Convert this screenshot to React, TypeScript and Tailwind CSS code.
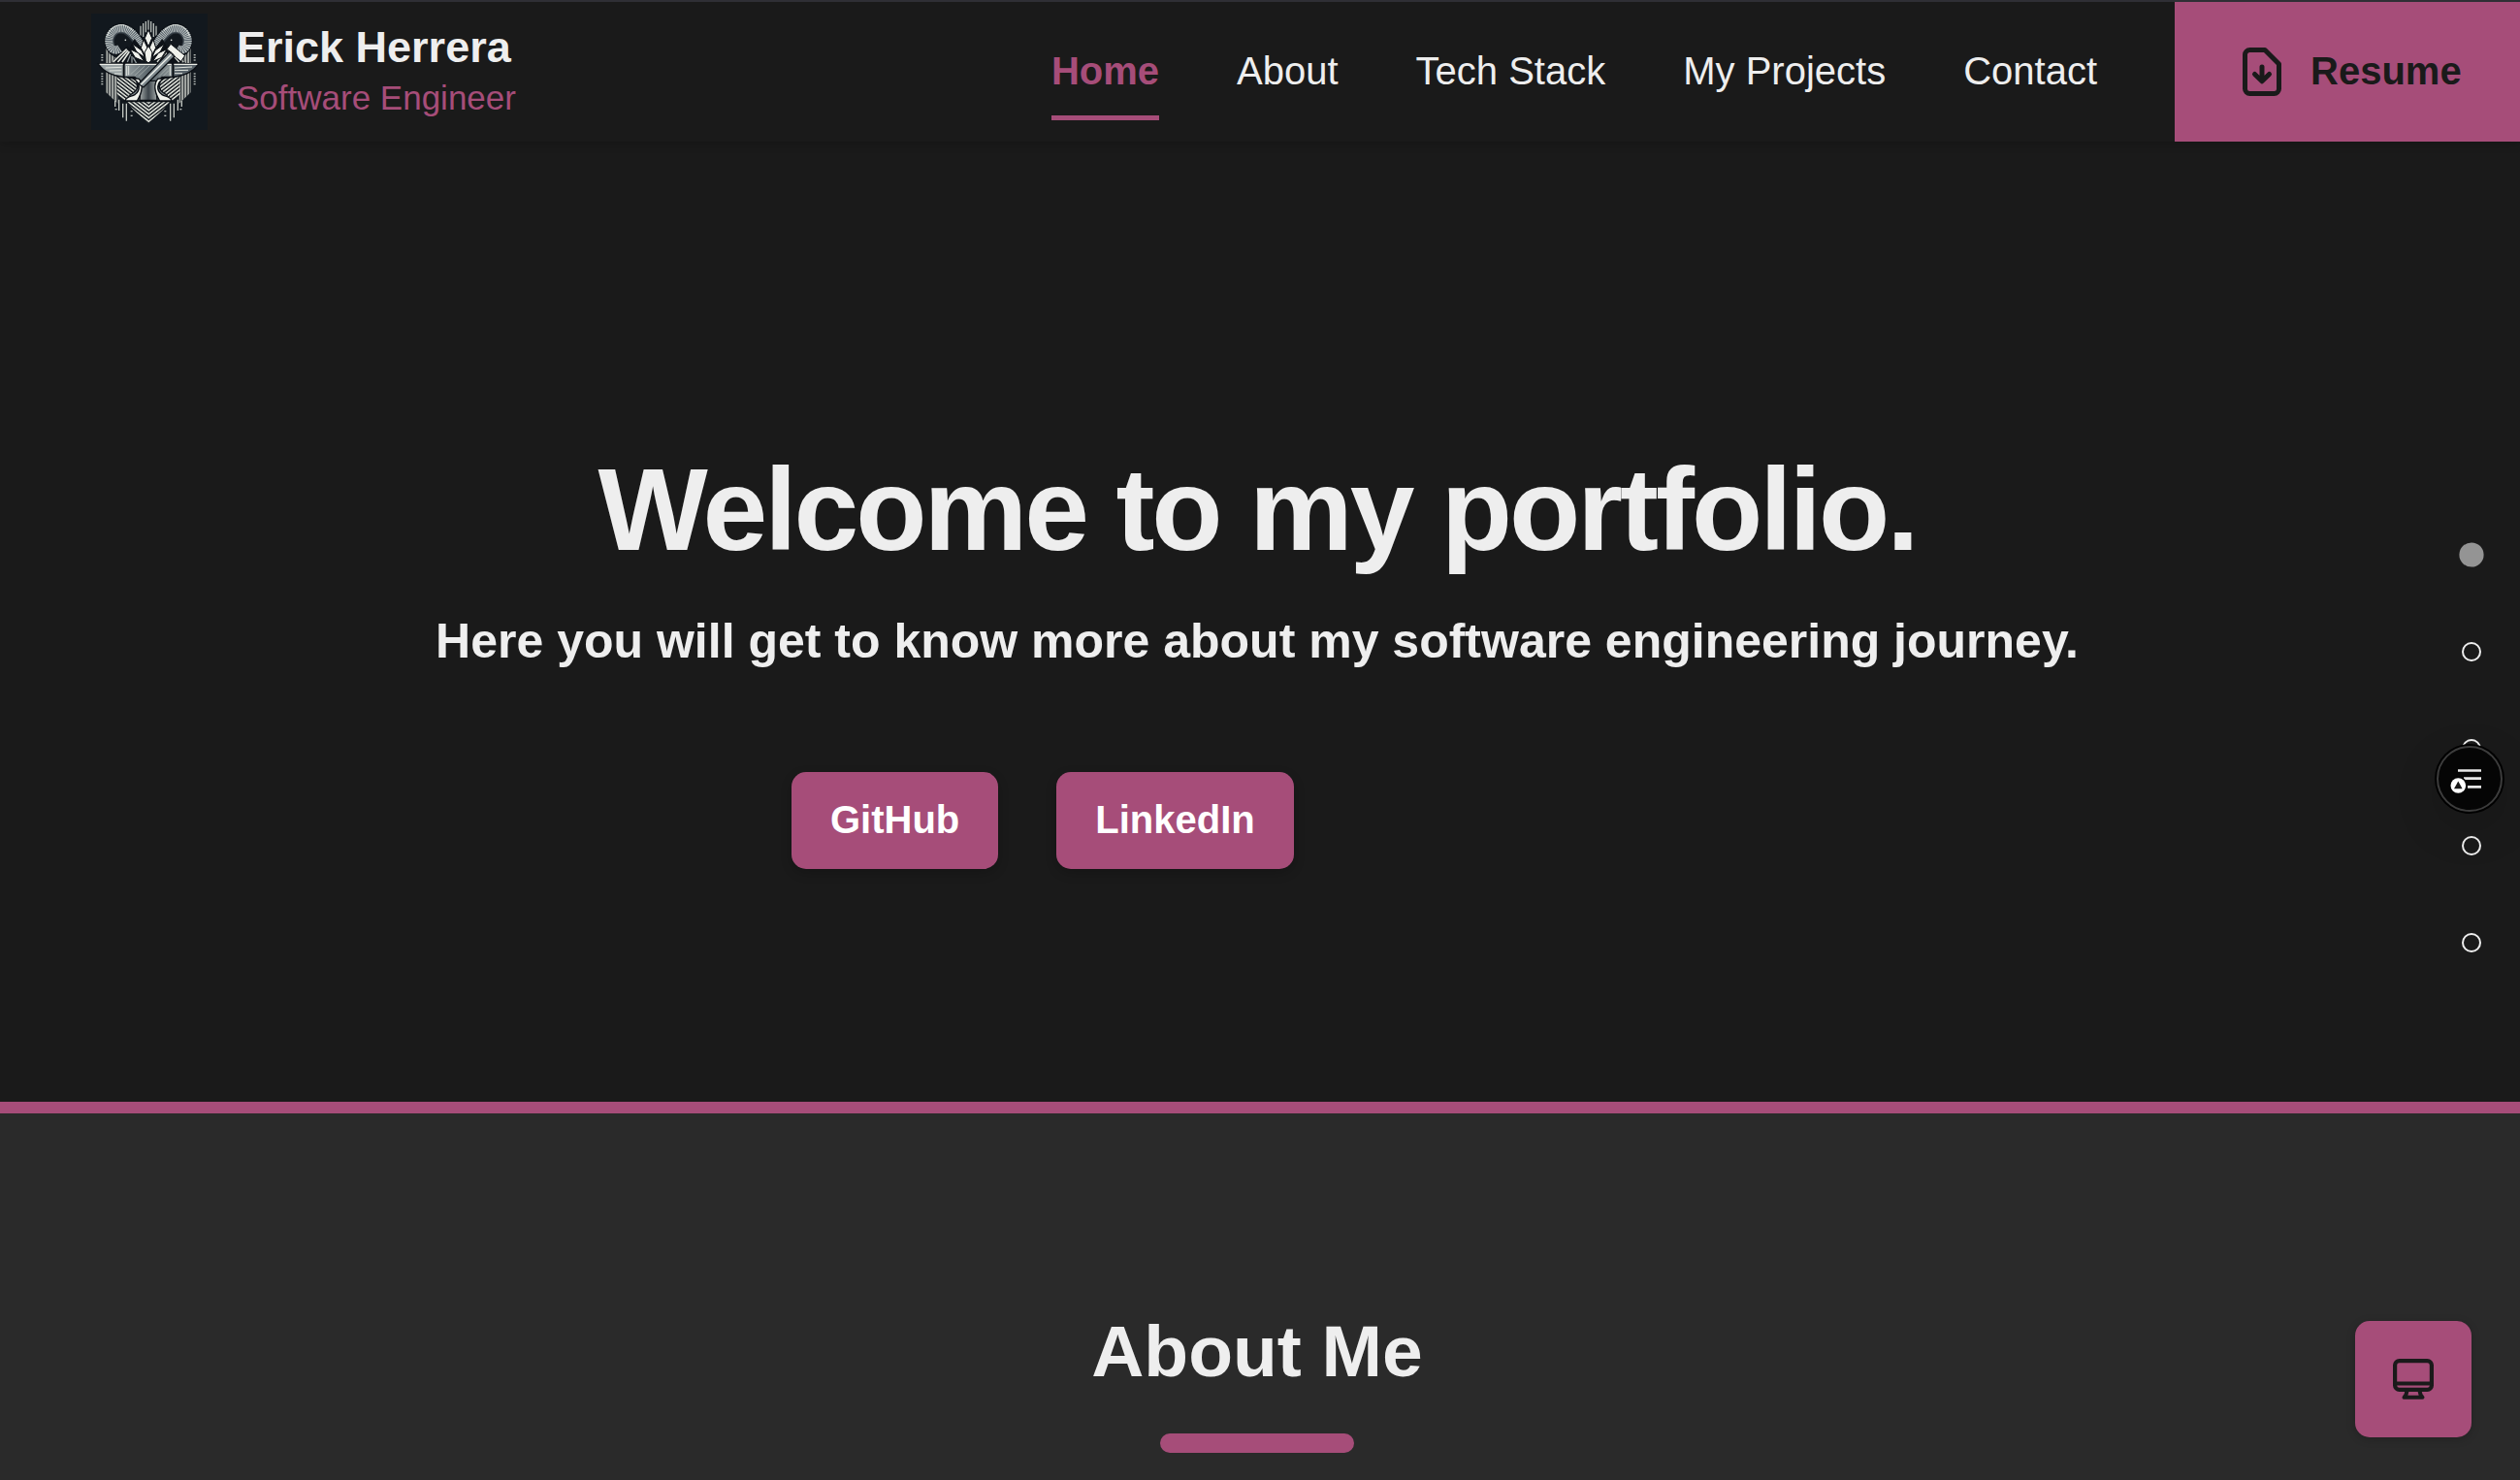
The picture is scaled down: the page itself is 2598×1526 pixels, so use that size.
import React from "react";

const navItems = ["Home", "About", "Tech Stack", "My Projects", "Contact"];

function Ram() {
  const horn = "M168 116C152 86 134 59 106 58C76 58 60 88 71 112C77 125 88 128 100 120";
  return (
    <g fill="none">
      <path d={horn} stroke="#0b0f14" strokeWidth="31" />
      <path d={horn} stroke="#56616a" strokeWidth="25" />
      <path d={horn} stroke="#c8cecb" strokeWidth="25" strokeDasharray="2.5 3" />
      <path d="M84 110C76 92 86 72 104 71C122 71 136 90 150 112" stroke="#39434b" strokeWidth="5" opacity=".75" />
      <path d="M62 82C68 60 86 47 106 47C120 47 132 56 142 66" stroke="#dfe3de" strokeWidth="3" />
    </g>
  );
}

function Logo() {
  const dashes = [
    [46, 138],
    [46, 146],
    [46, 154],
    [46, 196],
    [46, 204],
    [46, 212],
    [46, 220],
    [46, 228],
    [137, 312],
    [137, 326],
    [89, 306],
  ];
  return (
    <svg viewBox="12 12 360 360" className="h-[120px] w-[120px] shrink-0 bg-[#12181e]">
      <defs>
        <pattern id="vert" x="58" width="9" height="9" patternUnits="userSpaceOnUse">
          <rect width="9" height="9" fill="#0d1218" />
          <rect width="5" height="9" fill="#d3d7d0" />
        </pattern>
        <pattern id="diagR" width="9" height="9" patternUnits="userSpaceOnUse" patternTransform="rotate(38)">
          <rect width="9" height="9" fill="#0d1218" />
          <rect width="9" height="5" fill="#d8dcd4" />
        </pattern>
        <pattern id="diagL" width="9" height="9" patternUnits="userSpaceOnUse" patternTransform="rotate(-38)">
          <rect width="9" height="9" fill="#0d1218" />
          <rect width="9" height="5" fill="#d8dcd4" />
        </pattern>
        <linearGradient id="steel" x1="0" x2="1" y1="0" y2="0">
          <stop offset="0" stopColor="#98a1a3" />
          <stop offset=".5" stopColor="#5b666c" />
          <stop offset="1" stopColor="#8b9496" />
        </linearGradient>
        <linearGradient id="bodySteel" x1="0" x2="1" y1="0" y2="0">
          <stop offset="0" stopColor="#a4aaa9" />
          <stop offset=".5" stopColor="#3c444a" />
          <stop offset="1" stopColor="#a4aaa9" />
        </linearGradient>
      </defs>

      {/* crown lines above the head */}
      <path d="M165 50V80M173 42V84M181 36V70M189 32V66M197 36V70M205 42V84M213 50V80" stroke="#b4bab6" strokeWidth="4" />

      {/* striped heart-shaped backdrop */}
      <path d="M58 98H68V136L90 150V166H58Z" fill="url(#vert)" />
      <path d="M320 98H310V136L288 150V166H320Z" fill="url(#vert)" />
      <path d="M58 188L94 200V290L58 256Z" fill="url(#vert)" />
      <path d="M320 188L284 200V290L320 256Z" fill="url(#vert)" />
      <path d="M92 206L150 216L154 250L116 284L92 262Z" fill="url(#diagR)" />
      <path d="M286 206L228 216L224 250L262 284L286 262Z" fill="url(#diagL)" />
      <path d="M124 286H189V352L140 306Z" fill="url(#diagR)" />
      <path d="M254 286H189V352L238 306Z" fill="url(#diagL)" />
      <path
        d="M86 282V300M98 278V312M110 290V334M121 290V344M292 282V300M280 278V312M268 290V334M257 290V344"
        stroke="#c3c8c2"
        strokeWidth="4"
      />

      {/* mountains */}
      <path d="M74 164L124 112L166 166Z" fill="#0d1218" />
      <path d="M80 162L122 122M94 162L126 126M108 162L130 130" stroke="#e4e7e0" strokeWidth="5" />
      <path d="M124 162L134 138M138 164L138 144M152 166L142 148" stroke="#8d9698" strokeWidth="4" />
      <path d="M304 164L254 112L212 166Z" fill="#0d1218" />
      <path d="M298 162L262 126M284 162L252 126M216 162L238 134M228 162L246 134" stroke="#d3d7d0" strokeWidth="4" />

      <Ram />
      <g transform="matrix(-1 0 0 1 378 0)">
        <Ram />
      </g>
      <circle cx="118" cy="94" r="2.5" fill="#e8ebe6" />
      <circle cx="260" cy="94" r="2.5" fill="#e8ebe6" />

      {/* face */}
      <g fill="#f0f2ec" stroke="#0b0f14" strokeWidth="3">
        <path d="M146 92L168 120L182 152L150 128L132 118ZM232 92L210 120L196 152L228 128L246 118Z" fill="#0d1218" />
        <path d="M140 106L168 126L178 148L152 130ZM238 106L210 126L200 148L226 130Z" />
        <path d="M132 122L158 134L176 160L148 148ZM246 122L220 134L202 160L230 148Z" />
        <path d="M189 62L200 88L189 114L178 88Z" />
        <path d="M174 92L186 118L182 148L166 118ZM204 92L192 118L196 148L212 118Z" />
        <path d="M189 112L201 132L197 158L189 165L181 158L177 132Z" />
      </g>

      {/* anvil */}
      <g stroke="#0b0f14" strokeWidth="4">
        <path d="M34 167H112V208C84 206 50 194 34 167Z" fill="#9aa3a4" />
        <path d="M344 167H266V208C294 206 328 194 344 167Z" fill="#59636a" />
        <path d="M114 167H264V208H232C212 222 216 248 246 264L252 282H126L132 264C162 248 166 222 146 208H114Z" fill="url(#steel)" />
        <path d="M166 220H212L216 280H162Z" fill="url(#bodySteel)" />
        <path d="M140 212C166 226 164 250 148 262C136 270 124 266 116 282H154C166 262 176 234 160 214Z" fill="#f0f2ec" />
        <path d="M238 212C212 226 214 250 230 262C242 270 254 266 262 282H224C212 262 202 234 218 214Z" fill="#f0f2ec" />
      </g>
      <path d="M38 169H110M118 169H260M268 169H340" stroke="#eceee8" strokeWidth="4" />
      <path d="M56 180L106 178M68 189L106 188M84 198L106 198M270 180L324 177M270 188L312 187M270 197L294 197" stroke="#dfe3dd" strokeWidth="3" />
      <path d="M122 174V204M128 174V202M256 174V204" stroke="#dfe3dd" strokeWidth="3" />
      <path d="M134 200L162 174M146 204L178 174M158 206L192 174M222 206L250 178M234 206L252 188" stroke="#b4bbb8" strokeWidth="2" />

      {/* hammer */}
      <path d="M158 230L254 130L270 144L174 240Z" fill="#7f8a8f" stroke="#0b0f14" strokeWidth="4" />
      <path d="M166 232L260 138" stroke="#f0f2ec" strokeWidth="4" />
      <path d="M246 122L258 106L302 142L290 160L274 148L262 134Z" fill="#f0f2ec" stroke="#0b0f14" strokeWidth="3" />

      {dashes.map(([x, y]) => (
        <g key={`${x}-${y}`} fill="#b4bab6">
          <rect x={x - 3} y={y} width="6" height="4" />
          <rect x={375 - x} y={y} width="6" height="4" />
        </g>
      ))}
    </svg>
  );
}

function DownloadIcon() {
  return (
    <svg viewBox="0 0 40 50" className="h-[50px] w-10" fill="none" stroke="currentColor" strokeWidth="5" strokeLinejoin="round" strokeLinecap="round">
      <path d="M7.5 2.5H23L37.5 17V42.5a5 5 0 0 1-5 5H7.5a5 5 0 0 1-5-5V7.5a5 5 0 0 1 5-5Z" />
      <path d="M20 20V34.5M12.5 27.5L20 34.8L27.5 27.5" />
    </svg>
  );
}

function MonitorIcon() {
  return (
    <svg viewBox="0 0 42 42" className="h-[42px] w-[42px]" fill="none" stroke="currentColor" strokeWidth="4.2" strokeLinecap="round" strokeLinejoin="round">
      <rect x="2.1" y="2.1" width="37.8" height="29.8" rx="4.5" />
      <path d="M2.5 25.5H39.5" strokeWidth="3.8" />
      <path d="M14.5 33L13.5 37L11.5 39.8H30.5L28.5 37L27.5 33" strokeWidth="4" />
    </svg>
  );
}

function ReaderIcon() {
  return (
    <svg viewBox="0 0 72 72" className="h-[72px] w-[72px]">
      <circle cx="36" cy="36" r="36" fill="#000" />
      <circle cx="36" cy="36" r="33" fill="#050505" stroke="#3c3c3c" strokeWidth="2" />
      <path d="M24 27.5H48M30 35.7H48M34 44.3H48" stroke="#e8e8e8" strokeWidth="2.7" />
      <circle cx="24.3" cy="43" r="9.5" fill="#050505" />
      <circle cx="24.3" cy="43" r="7.8" fill="#fff" />
      <path d="M24.3 38.5L28.6 46.3H20Z" fill="#1a1a1a" />
    </svg>
  );
}

export default function App() {
  return (
    <div className="relative flex h-[1526px] w-full flex-col overflow-hidden bg-[#1a1a1a] font-['Liberation_Sans',Arial,sans-serif] text-[#eeeeee]">
      <header className="z-10 flex h-[146px] w-full shrink-0 items-stretch justify-between border-t-2 border-[#2f2f35] pl-[94px] shadow-[0_2px_10px_rgba(0,0,0,0.2)]">
        <div className="flex items-center gap-[30px]">
          <Logo />
          <div className="flex flex-col whitespace-nowrap">
            <span className="text-[45px] leading-[53px] font-bold">Erick Herrera</span>
            <span className="text-[35px] leading-[51px] text-[#a64d79]">Software Engineer</span>
          </div>
        </div>
        <div className="flex items-stretch gap-20">
          <nav className="flex items-center gap-20 whitespace-nowrap text-[40px] leading-[44px]">
            {navItems.map((item, i) => (
              <a
                key={item}
                className={
                  i === 0
                    ? "border-y-[5px] border-t-transparent border-b-[#a64d79] pt-[22px] pb-6 font-bold text-[#a64d79]"
                    : "pb-0.5"
                }
              >
                {item}
              </a>
            ))}
          </nav>
          <button className="flex w-[356px] items-center gap-[30px] bg-[#a64d79] pl-[70px] text-[40px] leading-[44px] font-bold text-[#1a1a1a]">
            <DownloadIcon />
            <span className="pb-0.5">Resume</span>
          </button>
        </div>
      </header>

      <main className="flex h-[990px] w-[2592px] shrink-0 flex-col items-center pt-[319px]">
        <h1 className="text-[120px] leading-[120px] font-bold tracking-[-0.025em] whitespace-nowrap">Welcome to my portfolio.</h1>
        <h2 className="mt-[46px] text-[50px] leading-[60px] font-bold whitespace-nowrap">
          Here you will get to know more about my software engineering journey.
        </h2>
        <div className="mt-[105px] flex w-[960px] gap-[60px] text-[40px] leading-[44px] font-bold text-white">
          <a className="flex h-[100px] items-center rounded-[15px] bg-[#a64d79] px-10 pb-0.5 shadow-[0_4px_12px_rgba(0,0,0,0.2)]">GitHub</a>
          <a className="flex h-[100px] items-center rounded-[15px] bg-[#a64d79] px-10 pb-0.5 shadow-[0_4px_12px_rgba(0,0,0,0.2)]">LinkedIn</a>
        </div>
      </main>

      <section className="w-full grow border-t-[12px] border-[#a64d79] bg-[#2a2a2a]">
        <div className="flex w-[2592px] flex-col items-center pt-[200px]">
          <h2 className="text-[75px] leading-[90px] font-bold">About Me</h2>
          <div className="mt-10 h-5 w-[200px] rounded-[10px] bg-[#a64d79]" />
        </div>
      </section>

      <div className="absolute top-[559px] right-[37px] flex w-[26px] flex-col items-center">
        <span className="size-[26px] scale-[0.97] rounded-full bg-[#949494]" />
        <span className="mt-[77px] size-5 rounded-full border-2 border-[#eeeeee]" />
        <span className="mt-20 size-5 rounded-full border-2 border-[#eeeeee]" />
        <span className="mt-20 size-5 rounded-full border-2 border-[#eeeeee]" />
        <span className="mt-20 size-5 rounded-full border-2 border-[#eeeeee]" />
      </div>
      <div className="absolute top-[767px] right-[16px] rounded-full shadow-[0_16px_48px_rgba(0,0,0,0.12)]">
        <ReaderIcon />
      </div>
      <button className="absolute top-[1362px] right-[50px] flex size-[120px] items-center justify-center rounded-[15px] bg-[#a64d79] text-[#1a1a1a] shadow-[0_2px_10px_rgba(0,0,0,0.2)]">
        <MonitorIcon />
      </button>
    </div>
  );
}
